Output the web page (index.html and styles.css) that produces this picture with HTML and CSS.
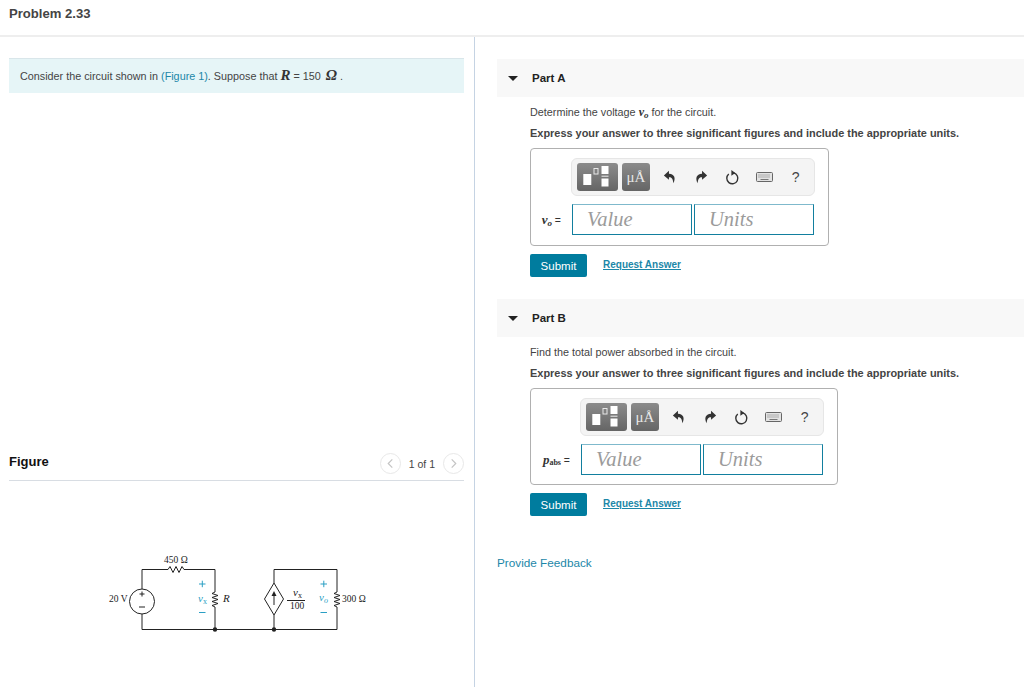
FILE: index.html
```html
<!DOCTYPE html>
<html lang="en">
<head>
<meta charset="utf-8">
<title>Problem 2.33</title>
<link rel="stylesheet" href="styles.css">
</head>
<body>
<svg class="defs" width="0" height="0" aria-hidden="true">
  <defs>
    <symbol id="i-templates" viewBox="0 0 41 28">
      <rect x="6.300" y="11" width="8" height="11" fill="#fff"/>
      <rect x="17" y="5.500" width="4" height="5.500" fill="none" stroke="#e8e8e8"/>
      <rect x="24.500" y="3" width="7" height="8" fill="#fff"/>
      <rect x="24.500" y="12.700" width="7" height="1" fill="#eee"/>
      <rect x="24.500" y="15.500" width="7" height="8" fill="#fff"/>
    </symbol>
    <symbol id="i-undo" viewBox="0 0 16 16">
      <path d="M6.800.8 1 6.200l5.800 5V8.200c2.800-.2 4.400 1.200 5.100 6.800 2.700-5.500 1.700-10.400-5.100-10.800z" fill="#333"/>
    </symbol>
    <symbol id="i-redo" viewBox="0 0 16 16">
      <path d="M9.200.8 15 6.200l-5.800 5V8.200c-2.800-.2-4.400 1.200-5.100 6.800-2.700-5.500-1.700-10.400 5.100-10.800z" fill="#333"/>
    </symbol>
    <symbol id="i-reset" viewBox="0 0 16 16">
      <path d="M9.300 3.100A5.900 5.900 0 1 1 4 4.300" fill="none" stroke="#333" stroke-width="1.500"/>
      <path d="M6.800 0 11 3.200 6.800 6z" fill="#333"/>
    </symbol>
    <symbol id="i-keys" viewBox="0 0 17 10">
      <rect x=".5" y=".5" width="16" height="9" rx="1" fill="#e2e2e2" stroke="#666"/>
      <path d="M2.500 3h12M2.500 5h12" stroke="#777" stroke-dasharray="1 1"/>
      <path d="M4.500 7.500h8" stroke="#777"/>
    </symbol>
    <symbol id="i-prev" viewBox="0 0 21 21">
      <path d="M12.500 6 8 10.500l4.500 4.500" fill="none" stroke="#c4c4c4" stroke-width="1.300"/>
    </symbol>
    <symbol id="i-next" viewBox="0 0 21 21">
      <path d="M8.500 6 13 10.500 8.500 15" fill="none" stroke="#c4c4c4" stroke-width="1.300"/>
    </symbol>
  </defs>
</svg>

<header class="top"><h1 class="title">Problem 2.33</h1></header>

<main class="layout">
  <section class="left">
    <div class="intro">Consider the circuit shown in <a class="link" href="#">(Figure 1)</a>. Suppose that <i class="m-var">R</i> = 150 <span class="m-ohm">Ω</span> .</div>

    <div class="fig-head">
      <h2 class="fig-title">Figure</h2>
      <div class="pager">
        <span class="pager-btn"><svg width="19" height="19" viewBox="0 0 19 19"><use href="#i-prev" width="19" height="19"/></svg></span>
        <span class="pager-text">1 of 1</span>
        <span class="pager-btn"><svg width="19" height="19" viewBox="0 0 19 19"><use href="#i-next" width="19" height="19"/></svg></span>
      </div>
    </div>

    <svg class="circuit" width="290" height="100" viewBox="90 540 290 100" role="img" aria-label="Circuit diagram">
      <g fill="none" stroke="#222" stroke-width="1">
        <path d="M142 589V569.500H168l2 -3 3 6 3 -6 3 6 3 -6 2 3H215V592"/>
        <path d="M215 592l-3 1.500 6 2 -6 2 6 2 -6 2 6 2 -6 2 3 1.500V629.500H142V614"/>
        <circle cx="142" cy="601.500" r="12.500"/>
        <path d="M274 583V569.500H337V592l-3 1.500 6 2 -6 2 6 2 -6 2 6 2 -6 2 3 1.500V629.500H215M274 629.500V615"/>
        <path d="M274 583l9.500 16 -9.500 16 -9.500 -16z"/>
        <path d="M274 605V595"/>
        <path d="M287 600.500h18"/>
      </g>
      <path d="M274 591l-2.500 5h5z" fill="#222"/>
      <circle cx="215" cy="629.500" r="2.200" fill="#222"/>
      <circle cx="274" cy="629.500" r="2.200" fill="#222"/>
      <path d="M139.500 594h5M142 591.500v5M139 607h6" stroke="#222" fill="none"/>
      <g class="c-text">
        <text x="164" y="563">450 Ω</text>
        <text x="109" y="602">20 V</text>
        <text class="c-big" x="223" y="602" font-style="italic">R</text>
        <text x="290" y="609">100</text>
        <text x="342" y="602">300 Ω</text>
        <text class="c-big" x="293" y="596" font-style="italic">v<tspan class="c-sub" dy="1.500" font-style="normal">x</tspan></text>
      </g>
      <g class="c-blue">
        <path d="M199 584h6.500M202.300 580.700v6.500M199 612.500h6.500M320.500 584h6.500M323.800 580.700v6.500M320.500 612.500h6.500" fill="none" stroke="#2a9fc4"/>
        <text x="198" y="602" font-style="italic">v<tspan class="c-sub" dy="1.500" font-style="normal">x</tspan></text>
        <text x="319" y="601" font-style="italic">v<tspan class="c-sub" dy="1.500">o</tspan></text>
      </g>
    </svg>
  </section>

  <section class="right">
    <article class="part">
      <div class="part-bar"><span class="caret"></span><h2 class="part-title">Part A</h2></div>
      <div class="part-body">
        <p class="q">Determine the voltage <i class="m-var">v<sub class="m-sub">o</sub></i> for the circuit.</p>
        <p class="q-bold">Express your answer to three significant figures and include the appropriate units.</p>
        <div class="answer">
          <div class="toolbar toolbar-a">
            <span class="tb-btn tb-wide"><svg width="41" height="28" viewBox="0 0 41 28"><use href="#i-templates" width="41" height="28"/></svg></span>
            <span class="tb-btn tb-unit">μÅ</span>
            <span class="tb-icon"><svg width="14" height="14"><use href="#i-undo"/></svg></span>
            <span class="tb-icon"><svg width="14" height="14"><use href="#i-redo"/></svg></span>
            <span class="tb-icon"><svg width="15" height="15"><use href="#i-reset"/></svg></span>
            <span class="tb-icon"><svg width="17" height="10"><use href="#i-keys"/></svg></span>
            <span class="tb-icon tb-help">?</span>
          </div>
          <div class="row">
            <span class="lab lab-a"><i class="m-var">v<sub class="m-sub">o</sub></i> =</span>
            <span class="field">Value</span>
            <span class="field">Units</span>
          </div>
        </div>
        <div class="actions"><button class="submit">Submit</button><a class="req" href="#">Request Answer</a></div>
      </div>
    </article>

    <article class="part part-b">
      <div class="part-bar"><span class="caret"></span><h2 class="part-title">Part B</h2></div>
      <div class="part-body">
        <p class="q">Find the total power absorbed in the circuit.</p>
        <p class="q-bold">Express your answer to three significant figures and include the appropriate units.</p>
        <div class="answer answer-b">
          <div class="toolbar toolbar-b">
            <span class="tb-btn tb-wide"><svg width="41" height="28" viewBox="0 0 41 28"><use href="#i-templates" width="41" height="28"/></svg></span>
            <span class="tb-btn tb-unit">μÅ</span>
            <span class="tb-icon"><svg width="14" height="14"><use href="#i-undo"/></svg></span>
            <span class="tb-icon"><svg width="14" height="14"><use href="#i-redo"/></svg></span>
            <span class="tb-icon"><svg width="15" height="15"><use href="#i-reset"/></svg></span>
            <span class="tb-icon"><svg width="17" height="10"><use href="#i-keys"/></svg></span>
            <span class="tb-icon tb-help">?</span>
          </div>
          <div class="row">
            <span class="lab lab-b"><i class="m-var">p<sub class="m-sub m-sub-up">abs</sub></i> =</span>
            <span class="field">Value</span>
            <span class="field">Units</span>
          </div>
        </div>
        <div class="actions"><button class="submit">Submit</button><a class="req" href="#">Request Answer</a></div>
      </div>
    </article>

    <a class="feedback" href="#">Provide Feedback</a>
  </section>
</main>
</body>
</html>
```
FILE: styles.css
```css
* { box-sizing: border-box; }
html, body { margin: 0; padding: 0; background: #fff; }
body {
  width: 1024px;
  height: 687px;
  overflow: hidden;
  font-family: "Liberation Sans", Arial, sans-serif;
  font-size: 12px;
  color: #444;
}
.defs { display: block; height: 0; }

.top {
  height: 37px;
  border-bottom: 2px solid #eeeeee;
  padding: 6px 9px 0;
}
.title { margin: 0; font-size: 13.100px; line-height: 15px; font-weight: bold; color: #444; }

.layout { display: flex; height: 650px; }
.left {
  width: 475px;
  flex: none;
  border-right: 1px solid #c5d3e3;
  padding: 21px 10px 0 9px;
}
.intro {
  height: 35px;
  line-height: 33px;
  padding-left: 11px;
  background: #e6f5f7;
  border-top: 1px solid #d9e6ea;
  font-size: 10.800px;
  color: #444;
}
.link { color: #1c87a8; text-decoration: none; }
.m-var { font-family: "Liberation Serif", serif; font-style: italic; font-weight: bold; font-size: 15px; color: #333; }
.m-ohm { font-family: "Liberation Serif", serif; font-style: italic; font-weight: bold; font-size: 15px; color: #333; margin-left: 2px; }

.fig-head {
  margin-top: 355px;
  height: 33px;
  display: flex;
  justify-content: space-between;
  align-items: center;
  border-bottom: 1px solid #d8dde3;
  padding-bottom: 5px;
}
.fig-title { margin: 0; font-size: 13px; font-weight: bold; color: #111; }
.pager { display: flex; align-items: center; gap: 8px; padding-top: 4px; }
.pager-btn {
  display: block;
  width: 21px;
  height: 21px;
  border: 1px solid #e8e8e8;
  border-radius: 50%;
}
.pager-btn svg { display: block; }
.pager-text { font-size: 10.500px; color: #444; }

.circuit { display: block; margin: 59px 0 0 81px; }
.c-text text { font-family: "Liberation Serif", serif; font-size: 9.500px; fill: #222; }
.c-text .c-big { font-size: 11px; }
.c-blue text { font-family: "Liberation Serif", serif; font-size: 11px; fill: #2a9fc4; }
.c-sub { font-size: 8px; }

.right { flex: 1; padding: 22px 0 0 22px; min-width: 0; }
.part-b { margin-top: 22px; }
.part-bar {
  height: 38px;
  background: #f8f8f8;
  display: flex;
  align-items: center;
  padding-left: 11px;
}
.caret {
  width: 0;
  height: 0;
  border-left: 5px solid transparent;
  border-right: 5px solid transparent;
  border-top: 5px solid #222;
  margin-right: 14px;
}
.part-title { margin: 0; font-size: 11.500px; font-weight: bold; color: #222; }
.part-body { padding: 9px 0 0 33px; }
.q { margin: 0; height: 12px; line-height: 13px; font-size: 10.800px; color: #444; }
.q .m-var { font-size: 12px; }
.q-bold { margin: 9px 0 9px; height: 12px; line-height: 12px; font-size: 10.950px; font-weight: bold; color: #444; }

.answer {
  display: inline-block;
  vertical-align: top;
  border: 1px solid #b0b0b0;
  border-radius: 4px;
  padding: 9px 13px 10px 0;
}
.answer-b { padding-bottom: 9px; }
.toolbar {
  display: flex;
  align-items: center;
  width: 244px;
  height: 38px;
  border: 1px solid #e6e6e6;
  border-radius: 6px;
  background: #f4f4f4;
  padding-left: 5px;
}
.toolbar-a { margin-left: 40px; }
.toolbar-b { margin-left: 49px; }
.tb-btn {
  display: flex;
  align-items: center;
  justify-content: center;
  height: 28px;
  border-radius: 3px;
  background: linear-gradient(#8b8b8b, #656565);
  color: #e8e8e8;
}
.tb-wide { width: 41px; margin-right: 4px; }
.tb-unit { width: 28px; margin-right: 4px; font-family: "Liberation Serif", serif; font-size: 15px; }
.tb-icon { width: 31.500px; display: flex; align-items: center; justify-content: center; }
.tb-help { font-size: 14px; color: #444; }

.row { display: flex; align-items: center; margin-top: 8px; gap: 2px; }
.lab { font-family: "Liberation Sans", sans-serif; font-size: 10.500px; color: #333; text-align: right; padding-right: 9px; white-space: nowrap; }
.lab .m-var { font-size: 13px; }
.lab-a { width: 39px; }
.lab-b { width: 48px; }
.m-sub { font-size: 9px; vertical-align: -2px; line-height: 0; }
.m-sub-up { font-size: 8px; font-style: normal; vertical-align: -1px; }
.field {
  width: 120px;
  height: 31px;
  border: 1px solid #127f9f;
  border-top-color: #7fb9cc;
  padding-left: 14px;
  font-family: "Liberation Serif", serif;
  font-style: italic;
  font-size: 20.500px;
  line-height: 29px;
  color: #9b9b9b;
}

.actions { display: flex; align-items: center; margin-top: 8px; }
.submit {
  width: 57px;
  height: 23px;
  border: 0;
  border-radius: 2px;
  padding: 0;
  background: #007c9e;
  color: #fff;
  font-family: "Liberation Sans", Arial, sans-serif;
  font-size: 11.500px;
}
.req {
  margin-left: 16px;
  margin-top: -3px;
  font-size: 10px;
  font-weight: bold;
  color: #1c87a8;
  text-decoration: underline;
}
.feedback {
  display: block;
  margin-top: 40px;
  font-size: 11.750px;
  color: #1c87a8;
  text-decoration: none;
}
```
